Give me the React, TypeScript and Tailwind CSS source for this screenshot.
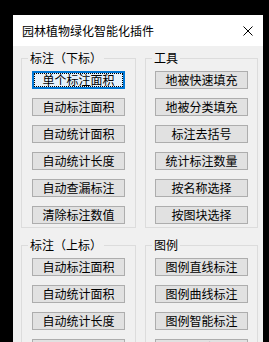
import React from "react";

const font = { fontFamily: '"Noto Sans CJK SC", "Microsoft YaHei", sans-serif' };

function Btn({ label, focused }: { label: string; focused?: boolean }) {
  return (
    <button
      className={
        focused
          ? "w-[93px] h-[18px] bg-[#e5f1fb] border-2 border-[#0078d7] text-[12px] leading-none text-black flex items-center justify-center outline-1 outline-dotted outline-black -outline-offset-[3px]"
          : "w-[93px] h-[18px] bg-[#e1e1e1] border border-[#adadad] text-[12px] leading-none text-black flex items-center justify-center"
      }
    >
      {label}
    </button>
  );
}

function Group({ title, items, first }: { title: string; items: string[]; first?: boolean }) {
  return (
    <fieldset className="border border-[#dcdcdc] flex flex-col items-center gap-[9px] pt-[6px] pb-[3px]">
      <legend className="ml-[6px] px-[2px] text-[12px] leading-[14px] text-black">{title}</legend>
      {items.map((it, i) => (
        <Btn key={it} label={it} focused={first && i === 0} />
      ))}
    </fieldset>
  );
}

export default function App() {
  return (
    <div className="bg-black h-[342px] overflow-hidden pt-[15px] pl-[13px]" style={font}>
      <div className="w-[250px] h-[400px] bg-[#f0f0f0] flex flex-col">
        <div className="h-[31px] bg-white flex items-center justify-between pl-[9px] pr-[10px]">
          <span className="text-[12px] text-black leading-none">园林植物绿化智能化插件</span>
          <svg width="10" height="10" viewBox="0 0 10 10">
            <path d="M0.5 0.5 L9.5 9.5 M9.5 0.5 L0.5 9.5" stroke="#000" strokeWidth="1" />
          </svg>
        </div>
        <div className="grid grid-cols-[115px_113px] gap-x-[9px] gap-y-[10px] pl-[8px] pt-[5px]">
          <Group
            title="标注（下标）"
            first
            items={["单个标注面积", "自动标注面积", "自动统计面积", "自动统计长度", "自动查漏标注", "清除标注数值"]}
          />
          <Group
            title="工具"
            items={["地被快速填充", "地被分类填充", "标注去括号", "统计标注数量", "按名称选择", "按图块选择"]}
          />
          <Group
            title="标注（上标）"
            items={["自动标注面积", "自动统计面积", "自动统计长度", "自动查漏标注"]}
          />
          <Group title="图例" items={["图例直线标注", "图例曲线标注", "图例智能标注", "图例清除标注"]} />
        </div>
      </div>
    </div>
  );
}
